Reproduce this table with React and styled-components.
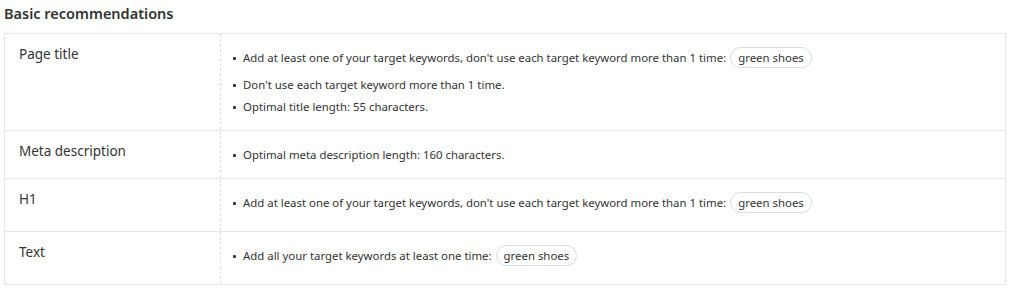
import React from "react";
import styled, { createGlobalStyle } from "styled-components";

const GlobalStyle = createGlobalStyle`
  body {
    margin: 0;
    background: #fff;
    font-family: "Noto Sans", "Open Sans", sans-serif;
    color: #333;
  }
`;

const Wrapper = styled.div`
  padding: 4px 4px 0 4px;
`;

const Title = styled.h3`
  margin: 0 0 11px 0;
  font-size: 14.5px;
  line-height: 18px;
  font-weight: 600;
  color: #333;
`;

const Table = styled.div`
  border: 1px solid #e6e6e6;
`;

const Row = styled.div`
  display: grid;
  grid-template-columns: 216px 1fr;
  border-top: ${(p) => (p.first ? "none" : "1px solid #e6e6e6")};
`;

const Label = styled.div`
  padding: 10px 14px;
  font-size: 13.5px;
  line-height: 20px;
  border-right: 1px dashed #dedede;
`;

const List = styled.ul`
  list-style: none;
  margin: 0;
  padding: 13px 12px 12px 12px;
`;

const Item = styled.li`
  position: relative;
  font-size: 11.4px;
  line-height: 22px;
  padding-left: 10px;

  &::before {
    content: "";
    position: absolute;
    left: 0;
    top: 10px;
    width: 3px;
    height: 3px;
    background: #333;
    border-radius: 1px;
  }
`;

const Pill = styled.span`
  display: inline-block;
  margin: 0 0 6px 4px;
  padding: 0 7px;
  border: 1px solid #dcdcdc;
  border-radius: 11px;
  line-height: 19px;
  vertical-align: top;
`;

const rows = [
  {
    label: "Page title",
    items: [
      { text: "Add at least one of your target keywords, don't use each target keyword more than 1 time:", pill: "green shoes" },
      { text: "Don't use each target keyword more than 1 time." },
      { text: "Optimal title length: 55 characters." },
    ],
  },
  {
    label: "Meta description",
    items: [{ text: "Optimal meta description length: 160 characters." }],
  },
  {
    label: "H1",
    items: [
      { text: "Add at least one of your target keywords, don't use each target keyword more than 1 time:", pill: "green shoes" },
    ],
  },
  {
    label: "Text",
    items: [{ text: "Add all your target keywords at least one time:", pill: "green shoes" }],
  },
];

export default function App() {
  return (
    <Wrapper>
      <GlobalStyle />
      <Title>Basic recommendations</Title>
      <Table>
        {rows.map((row, i) => (
          <Row key={row.label} first={i === 0}>
            <Label>{row.label}</Label>
            <List>
              {row.items.map((item, j) => (
                <Item key={j}>
                  {item.text}
                  {item.pill && <Pill>{item.pill}</Pill>}
                </Item>
              ))}
            </List>
          </Row>
        ))}
      </Table>
    </Wrapper>
  );
}
